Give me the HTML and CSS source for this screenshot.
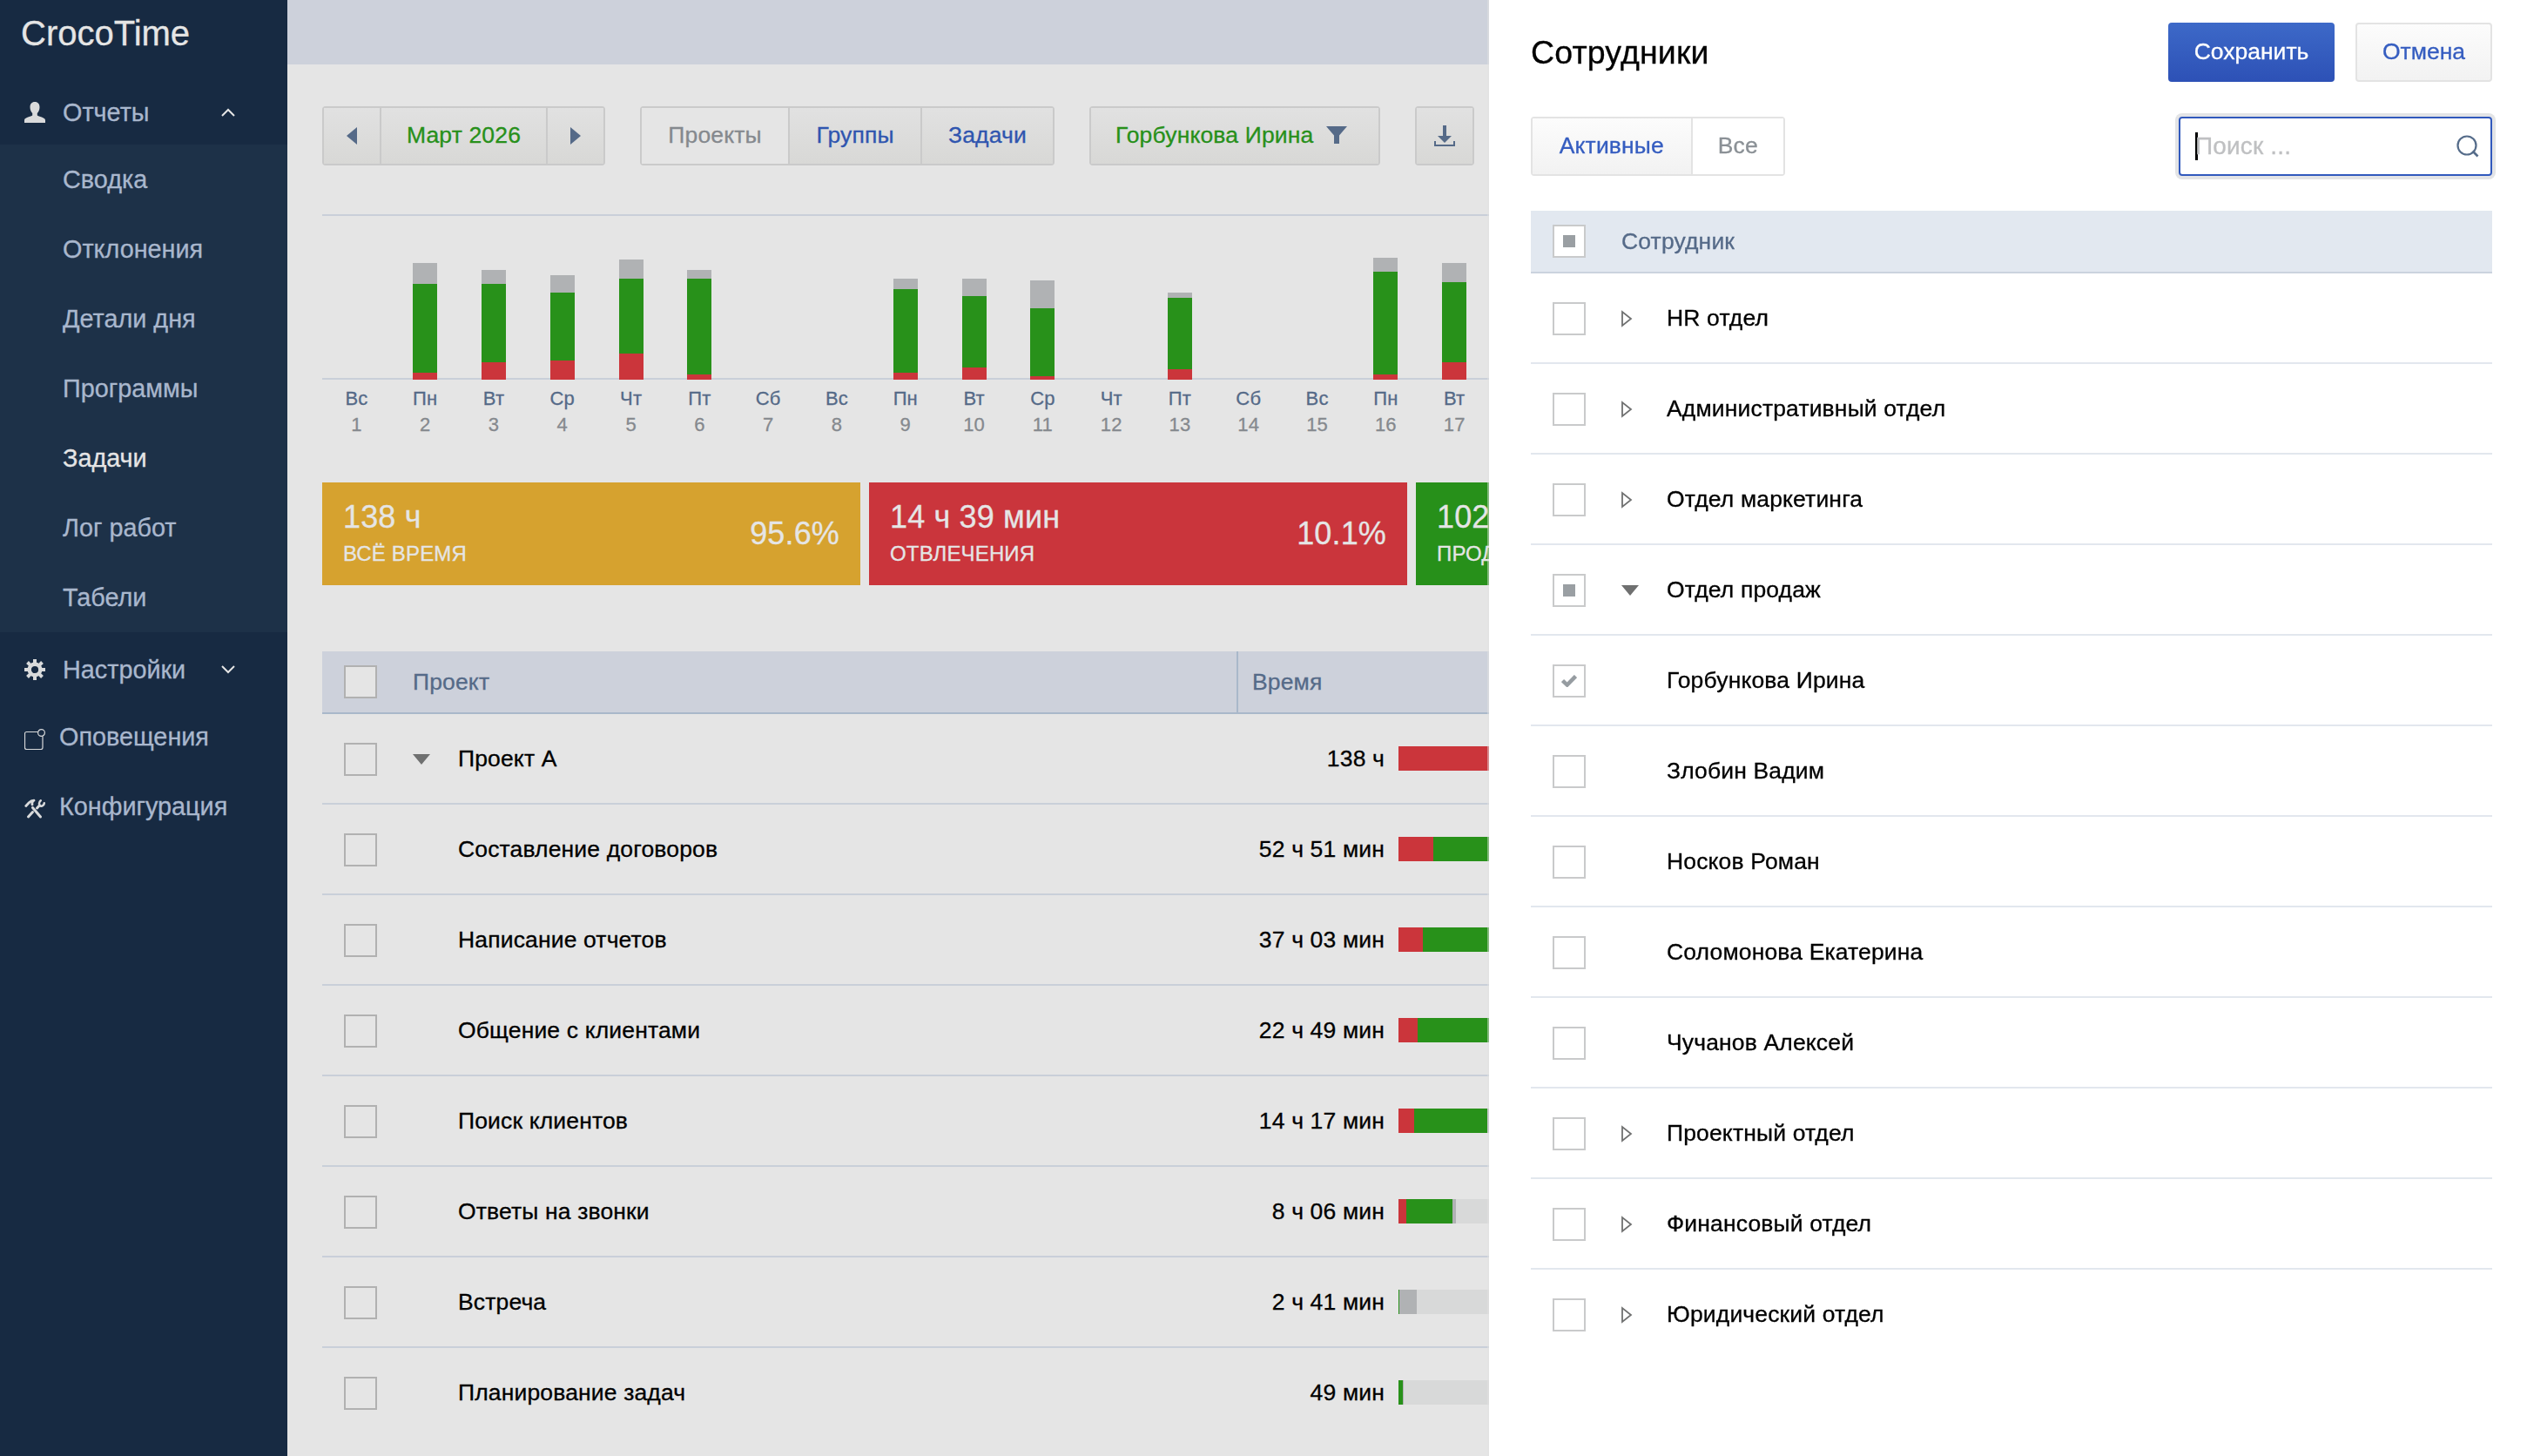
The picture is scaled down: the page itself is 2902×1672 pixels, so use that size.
FILE: index.html
```
<!DOCTYPE html>
<html lang="ru">

<head>
    <meta charset="utf-8">
    <title>CrocoTime</title>
    <link rel="stylesheet" href="styles.css">
</head>

<body>
    <div class="app">
        <!-- Sidebar -->
        <div class="sidebar">
            <div class="logo">CrocoTime</div>
            <div class="menu-head">
                <svg class="menu-icon" viewBox="0 0 24 24"><path fill="#d9dadb" d="M12 0c3.600 0 5.500 2.400 5.500 6 0 3-1.200 5.600-2.700 7v2.600c1.400 1.500 9.200 2.300 9.200 5.400v3H0v-3c0-3.100 7.800-3.900 9.200-5.400V13C7.700 11.600 6.500 9 6.500 6c0-3.600 1.900-6 5.500-6z"/></svg>
                <span>Отчеты</span>
                <svg class="chevron" viewBox="0 0 16 10"><path d="M1 9l7-7 7 7"/></svg>
            </div>
            <ul class="submenu">
                <li>Сводка</li>
                <li>Отклонения</li>
                <li>Детали дня</li>
                <li>Программы</li>
                <li class="active">Задачи</li>
                <li>Лог работ</li>
                <li>Табели</li>
            </ul>
            <div class="menu-head settings">
                <svg class="menu-icon" viewBox="0 0 24 24">
                    <g fill="#d9dadb">
                        <path d="M10 0h4v5h-4zM10 19h4v5h-4zM0 10h5v4H0zM19 10h5v4h-5z"/>
                        <path d="M10 0h4v5h-4zM10 19h4v5h-4zM0 10h5v4H0zM19 10h5v4h-5z" transform="rotate(45 12 12)"/>
                    </g>
                    <circle cx="12" cy="12" r="6.300" fill="none" stroke="#d9dadb" stroke-width="4.400"/>
                </svg>
                <span>Настройки</span>
                <svg class="chevron" viewBox="0 0 16 10"><path d="M1 1l7 7 7-7"/></svg>
            </div>
            <div class="menu-item">
                <svg class="menu-icon" viewBox="0 0 24 24"><g fill="none" stroke="#d9dadb" stroke-width="1.200"><path d="M15.500 3.500H2.500a2 2 0 0 0-2 2v16a2 2 0 0 0 2 2h16.500a2 2 0 0 0 2-2V8.500"/><circle cx="19.500" cy="4.500" r="3.900"/></g></svg>
                <span>Оповещения</span>
            </div>
            <div class="menu-item">
                <svg class="menu-icon" viewBox="0 0 24 24">
                    <g fill="none" stroke="#d9dadb" stroke-linecap="round">
                        <path d="M9.500 10.500L18.500 21" stroke-width="3"/>
                        <path d="M4.500 21l5-5.500M14.500 11l3-3.200" stroke-width="3"/>
                        <path d="M1.800 8.500l3.500-3.800C7 3 8.500 2.200 11 2.200 9 3.500 8.500 5 9 7" stroke-width="2.800" stroke-linejoin="round"/>
                        <path d="M18.800 2.200c-2.500 2-2.300 5.600-.3 6.300 1.800.6 4-.8 4.300-3.300" stroke-width="2.500"/>
                    </g>
                </svg>
                <span>Конфигурация</span>
            </div>
        </div>

        <!-- Report -->
        <div class="main">
            <div class="topbar"></div>
            <div class="content">
                <div class="toolbar">
                    <div class="group">
                        <div class="btn arrow"><svg width="12" height="20"><path fill="#556a88" d="M12 0v20L0 10z"/></svg></div>
                        <div class="btn month">Март 2026</div>
                        <div class="btn arrow"><svg width="12" height="20"><path fill="#556a88" d="M0 0v20l12-10z"/></svg></div>
                    </div>
                    <div class="group tabs">
                        <div class="btn pressed">Проекты</div>
                        <div class="btn">Группы</div>
                        <div class="btn">Задачи</div>
                    </div>
                    <div class="group filter">
                        <div class="btn">Горбункова Ирина
                            <svg width="24" height="20" viewBox="0 0 24 20"><path fill="#556a88" d="M0 0h24l-9 10.500V20H9v-9.500z"/></svg>
                        </div>
                    </div>
                    <div class="group">
                        <div class="btn download">
                            <svg width="24" height="24" viewBox="0 0 24 24"><path fill="#556a88" d="M10 0h4v12h6l-8 8-8-8h6zM0 18h2v4h20v-4h2v6H0z"/></svg>
                        </div>
                    </div>
                </div>

                <div class="chart" id="chart"></div>

                <div class="cards">
                    <div class="card card-all">
                        <div><div class="value">138 ч</div><div class="name">ВСЁ ВРЕМЯ</div></div>
                        <div class="value">95.6%</div>
                    </div>
                    <div class="card card-off">
                        <div><div class="value">14 ч 39 мин</div><div class="name">ОТВЛЕЧЕНИЯ</div></div>
                        <div class="value">10.1%</div>
                    </div>
                    <div class="card card-work">
                        <div><div class="value">102</div><div class="name">ПРОД</div></div>
                    </div>
                </div>

                <div class="table">
                    <div class="thead">
                        <span class="check"></span>
                        <div class="col-name">Проект</div>
                        <div class="col-time">Время</div>
                    </div>
                    <div id="projects"></div>
                </div>
            </div>
        </div>
    </div>

    <!-- Employee picker -->
    <div class="panel">
        <div class="panel-head">
            <h1>Сотрудники</h1>
            <button class="save">Сохранить</button>
            <button class="cancel">Отмена</button>
        </div>
        <div class="panel-filter">
            <div class="group">
                <div class="btn on">Активные</div>
                <div class="btn off">Все</div>
            </div>
            <div class="search">
                <span class="caret"></span>
                <span class="placeholder">Поиск ...</span>
                <svg width="26" height="26" viewBox="0 0 26 26"><g fill="none" stroke="#556c8a" stroke-width="2.200"><circle cx="12" cy="12" r="10.500"/><path d="M18.500 18.500l6 6" stroke-width="2.600"/></g></svg>
            </div>
        </div>
        <div class="thead">
            <span class="check part"></span>
            <div class="col-name">Сотрудник</div>
        </div>
        <div id="employees"></div>
    </div>

    <script>
        // grey, green and red heights of each day's bar
        var days = [
            ['Вс'], ['Пн', 24, 102, 8], ['Вт', 16, 90, 20], ['Ср', 20, 78, 22], ['Чт', 22, 86, 30], ['Пт', 10, 110, 6],
            ['Сб'], ['Вс'], ['Пн', 12, 96, 8], ['Вт', 20, 82, 14], ['Ср', 32, 78, 4], ['Чт'], ['Пт', 6, 82, 12],
            ['Сб'], ['Вс'], ['Пн', 16, 118, 6], ['Вт', 22, 92, 20]
        ];

        // red, green and grey widths of the time bar
        var projects = [
            ['Проект А', '138 ч', 400, 0, 0],
            ['Составление договоров', '52 ч 51 мин', 40, 300, 0],
            ['Написание отчетов', '37 ч 03 мин', 28, 200, 0],
            ['Общение с клиентами', '22 ч 49 мин', 22, 120, 0],
            ['Поиск клиентов', '14 ч 17 мин', 18, 84, 10],
            ['Ответы на звонки', '8 ч 06 мин', 9, 53, 4],
            ['Встреча', '2 ч 41 мин', 0, 1, 20],
            ['Планирование задач', '49 мин', 0, 5, 1]
        ];

        var employees = [
            ['HR отдел', 'closed'],
            ['Административный отдел', 'closed'],
            ['Отдел маркетинга', 'closed'],
            ['Отдел продаж', 'open', 'part'],
            ['Горбункова Ирина', '', 'checked'],
            ['Злобин Вадим'],
            ['Носков Роман'],
            ['Соломонова Екатерина'],
            ['Чучанов Алексей'],
            ['Проектный отдел', 'closed'],
            ['Финансовый отдел', 'closed'],
            ['Юридический отдел', 'closed']
        ];

        var icons = {
            open: '<svg width="20" height="12"><path fill="#6f7070" d="M0 0h20L10 12z"/></svg>',
            closed: '<svg width="13" height="20"><path fill="none" stroke="#6f7070" stroke-width="1.800" d="M1 2v16l10-8z"/></svg>',
            checked: '<svg width="18" height="14"><path fill="none" stroke="#969ca1" stroke-width="4.500" d="M1.500 6.500l5.200 5L16.500 1.500"/></svg>'
        };

        document.getElementById('chart').innerHTML = days.map(function (d, i) {
            var bar = d.length > 1 ? `<i class="grey" style="height:${d[1]}px"></i><i class="green" style="height:${d[2]}px"></i><i class="red" style="height:${d[3]}px"></i>` : '';
            return `<div class="day"><div class="bar">${bar}</div><div class="week">${d[0]}</div><div class="num">${i + 1}</div></div>`;
        }).join('');

        document.getElementById('projects').innerHTML = projects.map(function (p, i) {
            return `<div class="row"><span class="check"></span><span class="toggle">${i === 0 ? icons.open : ''}</span>
                <div class="title">${p[0]}</div><div class="time">${p[1]}</div>
                <div class="track"><i class="red" style="width:${p[2]}px"></i><i class="green" style="width:${p[3]}px"></i><i class="grey" style="width:${p[4]}px"></i></div></div>`;
        }).join('');

        document.getElementById('employees').innerHTML = employees.map(function (e) {
            return `<div class="row"><span class="check ${e[2] || ''}">${e[2] === 'checked' ? icons.checked : ''}</span>
                <span class="toggle">${icons[e[1]] || ''}</span><div class="title">${e[0]}</div></div>`;
        }).join('');
    </script>
</body>

</html>
```
FILE: styles.css
```
* {
    box-sizing: border-box;
}

body {
    margin: 0;
    height: 1672px;
    overflow: hidden;
    background: #e5e5e5;
    color: #000;
    font-family: "Liberation Sans", Arial, sans-serif;
    font-size: 26.5px;
    letter-spacing: 0.15px;
    white-space: nowrap;
    -webkit-text-stroke: 0.3px;
}

svg {
    display: block;
    flex: none;
}

.app {
    display: flex;
    height: 1672px;
}

/* Sidebar */
.sidebar {
    flex: none;
    width: 330px;
    background: #172a42;
    color: #a9b7cd;
    font-size: 28.8px;
    letter-spacing: 0;
}

.logo {
    height: 74px;
    margin-bottom: 18px;
    padding-left: 24px;
    line-height: 76px;
    font-size: 40px;
    color: #e5e5e5;
}

.menu-head,
.menu-item {
    display: flex;
    align-items: center;
    height: 74px;
    padding-left: 28px;
}

.menu-item {
    height: 80px;
}

.menu-head.settings {
    margin-top: 6px;
}

.menu-icon {
    width: 24px;
    height: 24px;
    margin-right: 20px;
}

.menu-item .menu-icon {
    margin-right: 16px;
    margin-top: 6px;
}

.chevron {
    width: 16px;
    height: 10px;
    margin-left: auto;
    margin-right: 60px;
    fill: none;
    stroke: #e5e5e5;
    stroke-width: 2;
}

.submenu {
    margin: 0;
    padding: 0;
    list-style: none;
    background: #1d3148;
}

.submenu li {
    height: 80px;
    padding-left: 72px;
    line-height: 80px;
}

.submenu .active {
    color: #e5e5e5;
}

/* Report */
.main {
    flex: none;
    width: 2572px;
}

.topbar {
    height: 74px;
    background: #cdd1db;
}

.content {
    padding: 48px 40px 0;
}

.toolbar {
    display: flex;
    gap: 40px;
}

.group {
    display: flex;
    height: 68px;
    border: 2px solid #cacaca;
    border-radius: 4px;
}

.btn {
    display: flex;
    align-items: center;
    justify-content: center;
    padding: 0 0 2px;
    background: linear-gradient(#e1e1e1, #d8d8d6);
    color: #2f55af;
}

.btn + .btn {
    border-left: 2px solid #cacaca;
}

.btn.arrow {
    width: 66px;
    padding: 0;
}

.btn.arrow:first-child {
    width: 64px;
}

.btn.month {
    width: 191px;
    color: #27901a;
}

.btn.pressed {
    background: #e5e5e5;
    color: #85898e;
}

.tabs {
    width: 476px;
}

.tabs .btn {
    width: 152px;
}

.tabs .btn:first-child {
    width: 168px;
}

.filter {
    width: 334px;
}

.filter .btn {
    flex: 1;
    justify-content: flex-start;
    padding-left: 28px;
    color: #27901a;
}

.filter svg {
    margin-left: 15px;
}

.btn.download {
    width: 64px;
    padding: 0;
}

/* Chart */
.chart {
    display: flex;
    height: 190px;
    margin-top: 56px;
    border-top: 2px solid #c9cfd9;
    border-bottom: 2px solid #c9cfd9;
}

.day {
    flex: none;
    width: 78.8px;
    text-align: center;
    font-size: 22px;
}

.bar {
    display: flex;
    flex-direction: column;
    justify-content: flex-end;
    width: 28px;
    height: 188px;
    margin: 0 auto;
}

.grey {
    background: #b0b2b4;
}

.green {
    background: #28911a;
}

.red {
    background: #cb353b;
}

.week {
    margin-top: 7px;
    line-height: 30px;
    color: #556a88;
}

.num {
    line-height: 30px;
    color: #85898e;
}

/* Cards */
.cards {
    display: flex;
    gap: 10px;
    margin-top: 118px;
}

.card {
    display: flex;
    flex: none;
    align-items: center;
    justify-content: space-between;
    width: 618px;
    height: 118px;
    padding: 0 24px;
    color: #e5e5e5;
    font-size: 24px;
}

.card .value {
    font-size: 36px;
    line-height: 46px;
}

.card .name {
    line-height: 38px;
}

.card-all {
    background: #d6a22f;
}

.card-off {
    background: #ca353c;
}

.card-work {
    background: #27901a;
}

/* Tables */
.table {
    margin-top: 76px;
}

.thead {
    display: flex;
    align-items: center;
    height: 72px;
    padding-left: 25px;
    border-bottom: 2px solid #a9b8ca;
    background: #cdd1db;
    color: #556a88;
}

.check {
    display: flex;
    flex: none;
    align-items: center;
    justify-content: center;
    width: 38px;
    height: 38px;
    border: 2px solid #b1b1b1;
}

.thead .check {
    background: #e5e5e5;
}

.check.part::after {
    content: "";
    width: 14px;
    height: 14px;
    background: #9a9fa3;
}

.col-name {
    padding-left: 41px;
}

.table .col-name {
    width: 987px;
}

.col-time {
    align-self: stretch;
    padding-left: 16px;
    border-left: 2px solid #a9b8ca;
    line-height: 70px;
}

.row {
    display: flex;
    align-items: center;
    height: 104px;
    padding-left: 25px;
    border-bottom: 2px solid #c9cfd9;
}

.row:last-child {
    border-bottom-color: transparent;
}

.row .check {
    margin-top: 2px;
}

.toggle {
    width: 51px;
    margin-left: 41px;
}

.toggle svg {
    margin-top: 1px;
}

.title {
    padding-left: 1px;
}

.table .title {
    width: 650px;
}

.table .time {
    width: 415px;
    text-align: right;
}

.track {
    display: flex;
    width: 400px;
    height: 28px;
    margin-left: 16px;
    background: #d8d9d9;
}

/* Employee picker */
.panel {
    position: fixed;
    top: 0;
    right: 0;
    width: 1192px;
    height: 1672px;
    padding: 26px 40px 0 48px;
    background: #fff;
    box-shadow: -2px 0 0 rgba(225, 225, 225, 0.5);
}

.panel-head {
    display: flex;
    align-items: center;
    height: 68px;
}

.panel h1 {
    margin: 0 auto 0 0;
    font-size: 37.5px;
    font-weight: normal;
}

.panel button {
    height: 68px;
    padding: 0 0 2px;
    border: none;
    border-radius: 4px;
    font-family: inherit;
    font-size: 26.5px;
}

.panel .save {
    width: 191px;
    background: linear-gradient(#3d69c8, #2d51b6);
    color: #fff;
}

.panel .cancel {
    width: 157px;
    margin-left: 24px;
    border: 2px solid #e3e3e3;
    background: linear-gradient(#fcfcfc, #f2f2f2);
    color: #355dc0;
}

.panel-filter {
    display: flex;
    justify-content: space-between;
    margin: 40px 0;
}

.panel .group {
    width: 292px;
    border-color: #e3e3e3;
}

.panel .btn {
    border-color: #e3e3e3;
}

.btn.on {
    width: 183px;
    background: linear-gradient(#fcfcfc, #f2f2f2);
    color: #355dc0;
}

.btn.off {
    width: 107px;
    background: #fff;
    color: #8b9196;
}

.search {
    display: flex;
    align-items: center;
    width: 360px;
    height: 68px;
    padding: 0 13px 0 17px;
    border: 2px solid #3159bd;
    border-radius: 4px;
    box-shadow: 0 0 0 4px #e3e4e6;
}

.caret {
    width: 3px;
    height: 32px;
    margin-right: -3px;
    background: #000;
}

.placeholder {
    font-size: 28px;
    color: #bfc0c2;
}

.search svg {
    margin-left: auto;
}

.panel .thead {
    border-bottom-color: #cbd3de;
    background: #e2e8f0;
}

.panel .check {
    border-color: #c9cacb;
}

.panel .thead .check {
    background: #fff;
}

.panel .row {
    border-bottom-color: #e2e7ee;
}

.panel .row:last-child {
    border-bottom-color: transparent;
}
```
